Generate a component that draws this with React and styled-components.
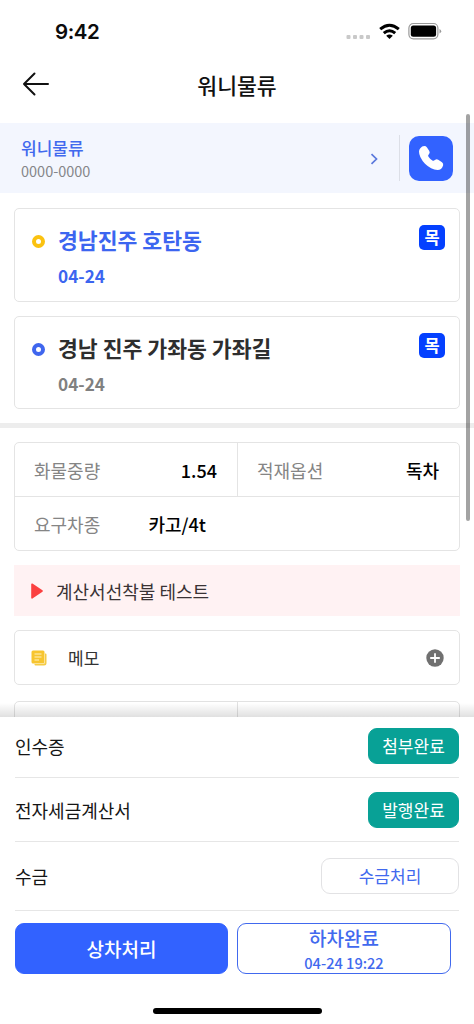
import React from "react";
import styled, { createGlobalStyle } from "styled-components";

const Global = createGlobalStyle`
  * { box-sizing: border-box; }
  body {
    margin: 0;
    background: #fff;
    font-family: "Noto Sans CJK KR", "Noto Sans", sans-serif;
    color: #111;
    -webkit-font-smoothing: antialiased;
  }
  button { font-family: inherit; padding: 0; margin: 0; cursor: pointer; }
`;

const Screen = styled.div`
  position: relative;
  width: 474px;
  height: 1024px;
  overflow: hidden;
  display: flex;
  flex-direction: column;
  background: #fff;
`;

const StatusBar = styled.div`
  height: 56px;
  flex: none;
  display: flex;
  align-items: center;
  justify-content: space-between;
  padding: 7px 32px 0 55px;
`;

const Clock = styled.div`
  font: 600 20.5px/24px Inter, sans-serif;
  letter-spacing: -0.4px;
  color: #0c0c0c;
`;

const StatusIcons = styled.div`
  display: flex;
  align-items: center;
  svg { display: block; }
`;

const Header = styled.header`
  height: 67px;
  flex: none;
  display: grid;
  grid-template-columns: 80px 1fr 80px;
  align-items: center;
  padding-bottom: 12px;
`;

const BackButton = styled.button`
  border: 0;
  background: none;
  width: 28px;
  height: 26px;
  margin-left: 22px;
  svg { display: block; }
`;

const Title = styled.h1`
  margin: 3px 0 0;
  text-align: center;
  font-size: 21.6px;
  line-height: 30px;
  font-weight: 500;
  color: #111;
`;

const Contact = styled.section`
  height: 70px;
  flex: none;
  background: #f3f6fe;
  display: flex;
  align-items: center;
  padding: 0 21px;
`;

const ContactInfo = styled.div`
  flex: 1;
  padding-top: 2px;
`;

const ContactName = styled.div`
  font-size: 17px;
  line-height: 24px;
  font-weight: 500;
  color: #4169ee;
`;

const ContactPhone = styled.div`
  font-size: 14.5px;
  line-height: 22px;
  color: #858589;
`;

const Chevron = styled.svg`
  display: block;
  margin-top: 2px;
`;

const Separator = styled.div`
  width: 1px;
  height: 46px;
  background: #dcdfe7;
  margin: 0 9px 0 21px;
`;

const CallButton = styled.button`
  width: 44px;
  height: 45px;
  border: 0;
  border-radius: 10px;
  background: #3262ff;
  display: flex;
  align-items: center;
  justify-content: center;
`;

const Stops = styled.div`
  flex: none;
  display: flex;
  flex-direction: column;
  gap: 14px;
  padding: 15px 14px 14px;
`;

const Stop = styled.article`
  height: 93.5px;
  border: 1px solid #e4e4e4;
  border-radius: 5px;
  display: flex;
  align-items: flex-start;
  padding: 15px 14px 0 17px;
`;

const Ring = styled.span`
  width: 13px;
  height: 13px;
  border: 4px solid ${(p) => p.$color};
  border-radius: 50%;
  margin: 11px 13px 0 0;
`;

const StopBody = styled.div`
  flex: 1;
`;

const StopName = styled.div`
  font-size: 21.6px;
  line-height: 32px;
  font-weight: 700;
  color: ${(p) => p.$color};
`;

const StopDate = styled.div`
  margin-top: 7px;
  font-size: 17.2px;
  line-height: 26px;
  font-weight: 700;
  color: ${(p) => p.$color};
`;

const DayBadge = styled.span`
  width: 26px;
  height: 25px;
  margin-top: 1px;
  border-radius: 5px;
  background: #0440ff;
  color: #fff;
  font-size: 16.5px;
  line-height: 25px;
  font-weight: 700;
  text-align: center;
`;

const Band = styled.div`
  height: 5px;
  flex: none;
  background: #ededed;
`;

const Details = styled.div`
  flex: none;
  padding: 14px 14px 0;
`;

const Specs = styled.div`
  height: 109px;
  border: 1px solid #e4e4e4;
  border-radius: 5px;
  display: flex;
  flex-direction: column;
`;

const SpecRow = styled.div`
  flex: 1;
  display: flex;
  & + & { border-top: 1px solid #e4e4e4; }
`;

const Spec = styled.div`
  width: 50%;
  display: flex;
  align-items: center;
  justify-content: space-between;
  padding: 0 ${(p) => p.$right || 20}px 0 19px;
  & + & { border-left: 1px solid #e4e4e4; }
`;

const SpecLabel = styled.span`
  font-size: 18px;
  color: #858585;
`;

const SpecValue = styled.span`
  font-size: 18px;
  font-weight: 500;
  color: #000;
`;

const Notice = styled.div`
  height: 51px;
  margin-top: 14px;
  background: #fff2f3;
  display: flex;
  align-items: center;
  gap: 13px;
  padding-left: 17px;
  font-size: 18px;
  color: #3a3335;
`;

const Memo = styled.div`
  height: 55px;
  margin-top: 14px;
  border: 1px solid #e4e4e4;
  border-radius: 5px;
  display: flex;
  align-items: center;
  padding: 0 15px 0 16px;
`;

const MemoLabel = styled.span`
  flex: 1;
  margin-left: 21px;
  font-size: 17px;
  color: #333;
`;

const NextCard = styled.div`
  height: 109px;
  margin-top: 16px;
  border: 1px solid #e2e2e2;
  border-radius: 5px;
  display: flex;
`;

const NextCell = styled.div`
  width: 50%;
  & + & { border-left: 1px solid #e2e2e2; }
`;

const Sheet = styled.section`
  position: absolute;
  left: 0;
  right: 0;
  bottom: 0;
  height: 307px;
  background: #fff;
  padding: 0 15px;
  display: flex;
  flex-direction: column;
  &::before {
    content: "";
    position: absolute;
    left: 0;
    right: 0;
    top: -14px;
    height: 14px;
    background: linear-gradient(rgba(0, 0, 0, 0), rgba(0, 0, 0, 0.12));
  }
`;

const Task = styled.div`
  height: ${(p) => p.$height}px;
  flex: none;
  display: flex;
  align-items: center;
  justify-content: space-between;
  padding-bottom: ${(p) => p.$bottom || 0}px;
  border-bottom: 1px solid #e6e6e6;
`;

const TaskLabel = styled.span`
  font-size: 18px;
  line-height: 26px;
  color: #151515;
`;

const TaskButton = styled.button`
  width: ${(p) => (p.$outline ? 138 : 91)}px;
  height: 36px;
  border: 1px solid ${(p) => (p.$outline ? "#e2e2e4" : "#08a196")};
  border-radius: 9px;
  background: ${(p) => (p.$outline ? "#fff" : "#08a196")};
  color: ${(p) => (p.$outline ? "#4169ee" : "#fff")};
  font-size: 17px;
  line-height: 34px;
`;

const Actions = styled.div`
  display: flex;
  gap: 9px;
  padding-top: 12px;
`;

const ActionButton = styled.button`
  width: ${(p) => (p.$outline ? 214 : 213)}px;
  height: 51px;
  border: 1px solid ${(p) => (p.$outline ? "#4169ee" : "#3262ff")};
  border-radius: 9px;
  background: ${(p) => (p.$outline ? "#fff" : "#3262ff")};
  color: ${(p) => (p.$outline ? "#4169ee" : "#fff")};
  font-size: 19px;
  line-height: 28px;
  font-weight: 500;
  display: flex;
  flex-direction: column;
  align-items: center;
  justify-content: center;
`;

const ActionTime = styled.small`
  font-size: 14.6px;
  line-height: 22px;
  font-weight: 500;
`;

const ScrollThumb = styled.div`
  position: absolute;
  left: 466px;
  top: 114px;
  width: 4px;
  height: 407px;
  border-radius: 2px;
  background: rgba(0, 0, 0, 0.36);
`;

const HomeIndicator = styled.div`
  width: 169px;
  height: 6px;
  border-radius: 3px;
  background: #000;
  margin: auto auto 10px;
`;

const stops = [
  { name: "경남진주 호탄동", date: "04-24", day: "목", ring: "#fbc210", nameColor: "#3c65f0", dateColor: "#3c65f0" },
  { name: "경남 진주 가좌동 가좌길", date: "04-24", day: "목", ring: "#3f66ee", nameColor: "#2e2e2e", dateColor: "#808080" },
];

export default function App() {
  return (
    <Screen>
      <Global />
      <StatusBar>
        <Clock>9:42</Clock>
        <StatusIcons>
          <svg width="96" height="20" viewBox="0 0 96 20">
            <g fill="#c9c9c9">
              <rect x="0.500" y="13" width="4" height="4" rx="1" />
              <rect x="7" y="13" width="4" height="4" rx="1" />
              <rect x="13.500" y="13" width="4" height="4" rx="1" />
              <rect x="20" y="13" width="4" height="4" rx="1" />
            </g>
            <g fill="none" stroke="#000" strokeWidth="3">
              <path d="M34.200 7.200Q43.500 -0.800 52.800 7.200" />
              <path d="M37.800 11.200Q43.500 6.200 49.200 11.200" />
            </g>
            <path d="M43.500 17L40.200 13.700Q43.500 11.200 46.800 13.700Z" fill="#000" />
            <rect x="62.900" y="1.500" width="29" height="15.300" rx="4.500" fill="none" stroke="#999" strokeWidth="1.200" />
            <rect x="64.800" y="3.500" width="25.300" height="11.300" rx="2.500" fill="#000" />
            <path d="M93.500 7v4.500q1.700-.7 1.700-2.250T93.500 7z" fill="#999" />
          </svg>
        </StatusIcons>
      </StatusBar>
      <Header>
        <BackButton aria-label="뒤로">
          <svg width="28" height="26" viewBox="0 0 28 26" fill="none" stroke="#111" strokeWidth="2" strokeLinecap="round" strokeLinejoin="round">
            <path d="M26 13H2M12.500 2.500L2 13l10.500 10.500" />
          </svg>
        </BackButton>
        <Title>워니물류</Title>
      </Header>

      <Contact>
        <ContactInfo>
          <ContactName>워니물류</ContactName>
          <ContactPhone>0000-0000</ContactPhone>
        </ContactInfo>
        <Chevron width="8" height="12" viewBox="0 0 8 12" fill="none" stroke="#5a78dc" strokeWidth="1.700">
          <path d="M1.500 1.200L6.500 6l-5 4.800" />
        </Chevron>
        <Separator />
        <CallButton aria-label="전화">
          <svg width="26" height="26" viewBox="0 0 26 26" fill="#fff">
            <path d="M2.300 3.300Q4 1 6.200 1Q8 1 9 2.400L11.300 5.900Q12.200 7.500 11.100 9L10.300 10.100Q9.900 10.900 10.500 11.700Q12 14 14.400 15.500Q15.300 16 16.100 15.400L17.300 14.700Q18.700 13.900 20.200 14.800L24 17.300Q25.700 18.600 25.100 20.500Q23.600 25 19.600 25Q13 24.600 7 18.700Q1 12.400 1 6.500Q1.100 4.800 2.300 3.300Z" />
          </svg>
        </CallButton>
      </Contact>

      <Stops>
        {stops.map((s) => (
          <Stop key={s.name}>
            <Ring $color={s.ring} />
            <StopBody>
              <StopName $color={s.nameColor}>{s.name}</StopName>
              <StopDate $color={s.dateColor}>{s.date}</StopDate>
            </StopBody>
            <DayBadge>{s.day}</DayBadge>
          </Stop>
        ))}
      </Stops>
      <Band />

      <Details>
        <Specs>
          <SpecRow>
            <Spec>
              <SpecLabel>화물중량</SpecLabel>
              <SpecValue>1.54</SpecValue>
            </Spec>
            <Spec>
              <SpecLabel>적재옵션</SpecLabel>
              <SpecValue>독차</SpecValue>
            </Spec>
          </SpecRow>
          <SpecRow>
            <Spec $right={31}>
              <SpecLabel>요구차종</SpecLabel>
              <SpecValue>카고/4t</SpecValue>
            </Spec>
          </SpecRow>
        </Specs>
        <Notice>
          <svg width="12" height="16" viewBox="0 0 12 16">
            <path d="M1 1.200L11 8L1 14.800Z" fill="#fb4040" stroke="#fb4040" strokeWidth="1.600" strokeLinejoin="round" />
          </svg>
          계산서선착불 테스트
        </Notice>
        <Memo>
          <svg width="16" height="16" viewBox="0 0 16 16">
            <path d="M14 3.500h.5q1 0 1 1V13q0 2.500-2.500 2.500H4.500q-1 0-1-1V14H12q2 0 2-2z" fill="#f5cb45" />
            <rect x="0.500" y="0.500" width="13" height="13" rx="1.500" fill="#f7c52f" />
            <path d="M3.500 4h7M3.500 7h7M3.500 10h4.500" stroke="#fff2c0" strokeWidth="1" />
          </svg>
          <MemoLabel>메모</MemoLabel>
          <svg width="18" height="18" viewBox="0 0 18 18">
            <circle cx="9" cy="9" r="8.700" fill="#707070" />
            <path d="M9 4.200v9.600M4.200 9h9.600" stroke="#fff" strokeWidth="1.800" />
          </svg>
        </Memo>
        <NextCard>
          <NextCell />
          <NextCell />
        </NextCard>
      </Details>

      <Sheet>
        <Task $height={61} $bottom={3}>
          <TaskLabel>인수증</TaskLabel>
          <TaskButton>첨부완료</TaskButton>
        </Task>
        <Task $height={64}>
          <TaskLabel>전자세금계산서</TaskLabel>
          <TaskButton>발행완료</TaskButton>
        </Task>
        <Task $height={69}>
          <TaskLabel>수금</TaskLabel>
          <TaskButton $outline>수금처리</TaskButton>
        </Task>
        <Actions>
          <ActionButton>상차처리</ActionButton>
          <ActionButton $outline>
            하차완료
            <ActionTime>04-24 19:22</ActionTime>
          </ActionButton>
        </Actions>
        <HomeIndicator />
      </Sheet>
      <ScrollThumb />
    </Screen>
  );
}
